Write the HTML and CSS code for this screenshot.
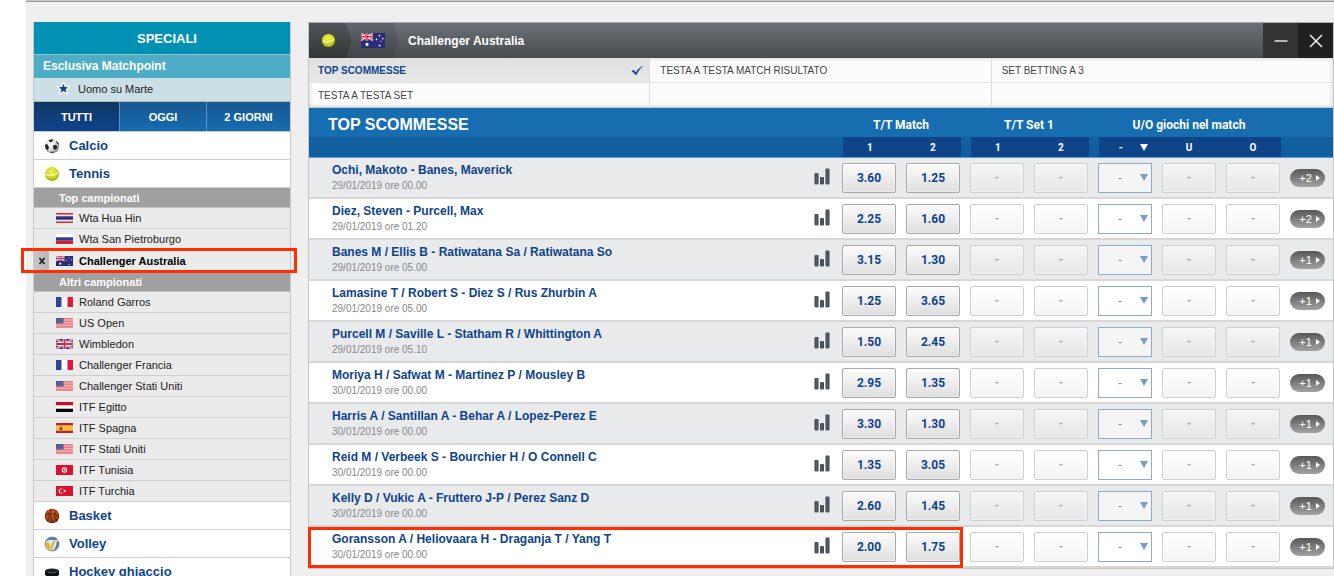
FILE: index.html
```html
<!DOCTYPE html>
<html lang="it">
<head>
<meta charset="utf-8">
<title>Challenger Australia - Scommesse</title>
<link rel="stylesheet" href="styles.css">
</head>
<body>
<svg class="defs" aria-hidden="true">
  <defs>
    <radialGradient id="g-tennis" cx=".45" cy=".35" r=".7"><stop offset="0" stop-color="#f0f250"/><stop offset=".6" stop-color="#cfd91f"/><stop offset="1" stop-color="#8c9a14"/></radialGradient>
    <radialGradient id="g-ball" cx=".4" cy=".35" r=".7"><stop offset="0" stop-color="#ffffff"/><stop offset=".6" stop-color="#dcdcd8"/><stop offset="1" stop-color="#77776f"/></radialGradient>
    <radialGradient id="g-basket" cx=".45" cy=".35" r=".7"><stop offset="0" stop-color="#cf6531"/><stop offset=".6" stop-color="#a8431b"/><stop offset="1" stop-color="#5a2410"/></radialGradient>
    <linearGradient id="g-bar" x1="0" x2="1" y1="0" y2="0"><stop offset="0" stop-color="#3b424b"/><stop offset=".5" stop-color="#545d68"/><stop offset="1" stop-color="#3b424b"/></linearGradient>
  </defs>
  <symbol id="tennis" viewBox="0 0 16 16"><circle cx="8" cy="8" r="7" fill="url(#g-tennis)"/><path d="M2 8.200C5 10.300 10 9.800 13.800 6.800" fill="none" stroke="#f8f9c8" stroke-width="1.200"/></symbol>
  <symbol id="soccer" viewBox="0 0 16 16"><circle cx="8" cy="8" r="7.300" fill="url(#g-ball)"/><path d="M4.500 2 8.500 1.200 9 3 6 4.500ZM1 6.500 3.500 6.200 5 9.500 3.800 12.200 1.500 10.500ZM9.200 7.200 12.200 6.800 13.500 9.500 11.500 12 9 10.500ZM12.500 3 15 6 14.200 6.800 12.300 4.800ZM6.300 14 9.800 13.800 8.500 15.200Z" fill="#25252a"/></symbol>
  <symbol id="basketball" viewBox="0 0 16 16"><circle cx="8" cy="8" r="7.300" fill="url(#g-basket)"/><path d="M1 7C5 5 11 5 15 9M7 1C6 5 7 11 9 15M3 2.800C6 6 6 10 3 13M12.500 2.500C9.500 6 10.500 11 13.500 12.500" fill="none" stroke="#3c170a" stroke-width=".7"/></symbol>
  <symbol id="volleyball" viewBox="0 0 16 16"><circle cx="8" cy="8" r="7.300" fill="#e7e7e1"/><path d="M1.500 5.500A7.300 7.300 0 0 1 13.300 3L10.500 4.500C7.500 3 4 4 1.500 5.500ZM12.500 5.500 14.800 6A7.300 7.300 0 0 1 8 15.200C11.500 13 12.800 9 12.500 5.500Z" fill="#4e7fb4"/><path d="M1 7.500 3.800 5.500 7 11 4.800 14ZM8.800 5.200 11.500 5 8 13.500 6 14.500Z" fill="#ddb52f"/><circle cx="8" cy="8" r="6.900" fill="none" stroke="#6c7984" stroke-width=".8"/></symbol>
  <symbol id="puck" viewBox="0 0 16 16"><path d="M1 7v3.500C1 13.500 15 13.500 15 10.500V7Z" fill="#101112"/><ellipse cx="8" cy="7" rx="7" ry="2.600" fill="#1d2022"/><path d="M4 8.600h8" stroke="#5b6062" stroke-width=".8"/></symbol>
  <symbol id="star" viewBox="0 0 14 14"><path d="M7 .4 9 4.600 13.700 5.200 10.300 8.300 11.200 13.200 7 10.900 2.800 13.200 3.700 8.300 .3 5.200 5 4.600Z" fill="#fff" stroke="#fff"/><path d="M7 2 8.400 5.400 12 5.700 9.300 8 10.200 11.600 7 9.700 3.800 11.600 4.700 8 2 5.700 5.600 5.400Z" fill="#16458d"/></symbol>
  <symbol id="stats" viewBox="0 0 16 17"><rect x=".5" y="5" width="4" height="11.500" rx="1" fill="url(#g-bar)"/><rect x="6" y="9" width="4" height="7.500" rx="1" fill="url(#g-bar)"/><rect x="11.500" y=".5" width="4" height="16" rx="1" fill="url(#g-bar)"/></symbol>
  <symbol id="f-th" viewBox="0 0 17 10" preserveAspectRatio="none"><path fill="#e9eaf0" d="M0 0h17v10H0z"/><path fill="#d4283a" d="M0 0h17v1.500H0zM0 8.500h17V10H0z"/><path fill="#2b2f73" d="M0 3.300h17v3.400H0z"/></symbol>
  <symbol id="f-ru" viewBox="0 0 17 10"><path fill="#fff" d="M0 0h17v3.300H0z"/><path fill="#2b3b9c" d="M0 3.300h17v3.400H0z"/><path fill="#d0202f" d="M0 6.700h17V10H0z"/></symbol>
  <symbol id="f-au" viewBox="0 0 24 14" preserveAspectRatio="none"><path fill="#2b2b7c" d="M0 0h24v14H0z"/><path d="M0 0 12 7M12 0 0 7" stroke="#fff" stroke-width="1.600"/><path d="M0 0 12 7M12 0 0 7" stroke="#e0283f" stroke-width=".7"/><path d="M6 0v7M0 3.500h12" stroke="#fff" stroke-width="2.600"/><path d="M6 0v7M0 3.500h12" stroke="#ec2040" stroke-width="1.500"/><g fill="#fff"><circle cx="6" cy="10.700" r="1.500"/><circle cx="18.500" cy="2.500" r=".8"/><circle cx="15.500" cy="6" r=".8"/><circle cx="21.800" cy="5.200" r=".8"/><circle cx="20" cy="7.800" r=".5"/><circle cx="18.500" cy="11.600" r=".9"/></g></symbol>
  <symbol id="f-fr" viewBox="0 0 17 10"><path fill="#fff" d="M0 0h17v10H0z"/><path fill="#2d449c" d="M0 0h5.500v10H0z"/><path fill="#e3173b" d="M11.500 0H17v10h-5.500z"/></symbol>
  <symbol id="f-us" viewBox="0 0 17 10"><path fill="#f4cccf" d="M0 0h17v10H0z"/><path stroke="#e0616b" stroke-width=".8" d="M0 .4h17M0 2h17M0 3.600h17M0 5.200h17M0 6.800h17M0 8.400h17M0 9.800h17"/><path fill="#52588c" d="M0 0h7.500v5.500H0z"/><path stroke="#9498bb" stroke-width=".5" stroke-dasharray=".6 .8" d="M.5 1.300h7M.5 2.800h7M.5 4.300h7"/></symbol>
  <symbol id="f-gb" viewBox="0 0 17 10"><path fill="#2c3380" d="M0 0h17v10H0z"/><path d="M0 0 17 10M17 0 0 10" stroke="#fff" stroke-width="2"/><path d="M0 0 17 10M17 0 0 10" stroke="#d92840" stroke-width=".8"/><path d="M8.500 0v10M0 5h17" stroke="#fff" stroke-width="3.400"/><path d="M8.500 0v10M0 5h17" stroke="#d92840" stroke-width="1.900"/></symbol>
  <symbol id="f-eg" viewBox="0 0 17 10"><path fill="#fff" d="M0 0h17v10H0z"/><path fill="#c8102e" d="M0 0h17v3.300H0z"/><path fill="#080808" d="M0 6.700h17V10H0z"/></symbol>
  <symbol id="f-es" viewBox="0 0 17 10"><path fill="#f3c241" d="M0 0h17v10H0z"/><path fill="#c51e35" d="M0 0h17v2.300H0zM0 7.700h17V10H0z"/><path fill="#764b27" d="M3.500 4.500h1V3.500h1v1h1v2.500h-3z"/></symbol>
  <symbol id="f-tn" viewBox="0 0 17 10"><path fill="#d9122d" d="M0 0h17v10H0z"/><circle cx="8.500" cy="5" r="2.700" fill="#fff"/><circle cx="8.600" cy="5" r="1.700" fill="#d9122d"/><circle cx="9.200" cy="5" r="1.200" fill="#fff"/><circle cx="9.400" cy="5" r=".7" fill="#d9122d"/></symbol>
  <symbol id="f-tr" viewBox="0 0 17 10"><path fill="#d9122d" d="M0 0h17v10H0z"/><circle cx="5.200" cy="5" r="2.500" fill="#fff"/><circle cx="5.900" cy="5" r="2" fill="#d9122d"/><circle cx="8.800" cy="5" r=".9" fill="#fff"/></symbol>
</svg>
<div class="page">
  <aside class="sidebar">
    <h2 class="specials-title">SPECIALI</h2>
    <h3 class="specials-sub">Esclusiva Matchpoint</h3>
    <a class="specials-link" href="#"><svg class="star"><use href="#star"/></svg>Uomo su Marte</a>
    <div class="day-tabs">
      <button class="day-tab is-active" type="button">TUTTI</button>
      <button class="day-tab" type="button">OGGI</button>
      <button class="day-tab" type="button">2 GIORNI</button>
    </div>
    <nav>
      <a class="sport" href="#"><svg class="ball"><use href="#soccer"/></svg>Calcio</a>
      <a class="sport" href="#"><svg class="ball"><use href="#tennis"/></svg>Tennis</a>
      <h4 class="group">Top campionati</h4>
      <ul class="leagues">
        <li class="league"><a href="#"><svg class="flag"><use href="#f-th"/></svg>Wta Hua Hin</a></li>
        <li class="league"><a href="#"><svg class="flag"><use href="#f-ru"/></svg>Wta San Pietroburgo</a></li>
        <li class="league is-selected"><button class="remove" type="button" aria-label="Rimuovi"><svg viewBox="0 0 8 8"><path d="M1.500 1 6.500 7M6.500 1 1.500 7" stroke="#222" stroke-width="1.800"/></svg></button><a href="#"><svg class="flag"><use href="#f-au"/></svg>Challenger Australia</a></li>
      </ul>
      <h4 class="group">Altri campionati</h4>
      <ul class="leagues">
        <li class="league"><a href="#"><svg class="flag"><use href="#f-fr"/></svg>Roland Garros</a></li>
        <li class="league"><a href="#"><svg class="flag"><use href="#f-us"/></svg>US Open</a></li>
        <li class="league"><a href="#"><svg class="flag"><use href="#f-gb"/></svg>Wimbledon</a></li>
        <li class="league"><a href="#"><svg class="flag"><use href="#f-fr"/></svg>Challenger Francia</a></li>
        <li class="league"><a href="#"><svg class="flag"><use href="#f-us"/></svg>Challenger Stati Uniti</a></li>
        <li class="league"><a href="#"><svg class="flag"><use href="#f-eg"/></svg>ITF Egitto</a></li>
        <li class="league"><a href="#"><svg class="flag"><use href="#f-es"/></svg>ITF Spagna</a></li>
        <li class="league"><a href="#"><svg class="flag"><use href="#f-us"/></svg>ITF Stati Uniti</a></li>
        <li class="league"><a href="#"><svg class="flag"><use href="#f-tn"/></svg>ITF Tunisia</a></li>
        <li class="league"><a href="#"><svg class="flag"><use href="#f-tr"/></svg>ITF Turchia</a></li>
      </ul>
      <a class="sport" href="#"><svg class="ball"><use href="#basketball"/></svg>Basket</a>
      <a class="sport" href="#"><svg class="ball"><use href="#volleyball"/></svg>Volley</a>
      <a class="sport" href="#"><svg class="ball"><use href="#puck"/></svg>Hockey ghiaccio</a>
    </nav>
  </aside>
  <main class="panel">
    <header class="panel-head">
      <a class="crumb crumb-sport" href="#" aria-label="Tennis"><svg class="head-ball"><use href="#tennis"/></svg></a>
      <a class="crumb crumb-country" href="#" aria-label="Australia"><svg class="head-flag"><use href="#f-au"/></svg></a>
      <h1 class="panel-title">Challenger Australia</h1>
      <button class="win win-min" type="button" aria-label="Riduci"><svg viewBox="0 0 14 14"><path d="M.5 7h13" stroke="#eee" stroke-width="1.400"/></svg></button>
      <button class="win win-close" type="button" aria-label="Chiudi"><svg viewBox="0 0 14 14"><path d="M1 1l12 12M13 1 1 13" stroke="#eee" stroke-width="1.500"/></svg></button>
    </header>
    <div class="markets">
      <button class="market is-active" type="button">TOP SCOMMESSE<svg class="check" viewBox="0 0 13 11"><path d="M.5 6 2.500 4.800 4.800 7.200C7 4 9.500 1.500 12.600.3 9.500 3.300 7 6.800 5.300 10.600Z" fill="#1c4f9b"/></svg></button>
      <button class="market" type="button">TESTA A TESTA MATCH RISULTATO</button>
      <button class="market" type="button">SET BETTING A 3</button>
      <button class="market" type="button">TESTA A TESTA SET</button>
      <span class="market"></span>
      <span class="market"></span>
    </div>
    <table class="odds">
      <colgroup><col><col class="c-odd" span="7"><col class="c-more"></colgroup>
      <thead>
        <tr class="head-groups"><th class="head-title" scope="col">TOP SCOMMESSE</th><th colspan="2" scope="colgroup">T/T Match</th><th colspan="2" scope="colgroup">T/T Set 1</th><th colspan="3" scope="colgroup">U/O giochi nel match</th><td></td></tr>
        <tr class="head-cols"><td></td><th scope="col"><div class="hc first">1</div></th><th scope="col"><div class="hc last">2</div></th><th scope="col"><div class="hc first">1</div></th><th scope="col"><div class="hc last">2</div></th><th scope="col"><div class="hc first"><select class="line-all" aria-label="Linea per tutti"><option>-</option></select><svg class="tri" viewBox="0 0 8 7"><path d="M0 0h8L4 7z" fill="#fff"/></svg></div></th><th scope="col"><div class="hc">U</div></th><th scope="col"><div class="hc last">O</div></th><td></td></tr>
      </thead>
      <tbody id="events">
      </tbody>
    </table>
  </main>
</div>
<script src="events.js"></script>
</body>
</html>
```
FILE: events.js
```js
const events = [
  ["Ochi, Makoto - Banes, Maverick", "29/01/2019 ore 00.00", "3.60", "1.25", 2],
  ["Diez, Steven - Purcell, Max", "29/01/2019 ore 01.20", "2.25", "1.60", 2],
  ["Banes M / Ellis B - Ratiwatana Sa / Ratiwatana So", "29/01/2019 ore 05.00", "3.15", "1.30", 1],
  ["Lamasine T / Robert S - Diez S / Rus Zhurbin A", "29/01/2019 ore 05.00", "1.25", "3.65", 1],
  ["Purcell M / Saville L - Statham R / Whittington A", "29/01/2019 ore 05.10", "1.50", "2.45", 1],
  ["Moriya H / Safwat M - Martinez P / Mousley B", "30/01/2019 ore 00.00", "2.95", "1.35", 1],
  ["Harris A / Santillan A - Behar A / Lopez-Perez E", "30/01/2019 ore 00.00", "3.30", "1.30", 1],
  ["Reid M / Verbeek S - Bourchier H / O Connell C", "30/01/2019 ore 00.00", "1.35", "3.05", 1],
  ["Kelly D / Vukic A - Fruttero J-P / Perez Sanz D", "30/01/2019 ore 00.00", "2.60", "1.45", 1],
  ["Goransson A / Heliovaara H - Draganja T / Yang T", "30/01/2019 ore 00.00", "2.00", "1.75", 1]
];

const odd = (value) => `<td><button class="odd" type="button">${value}</button></td>`;
const closed = `<td><button class="odd" type="button" disabled>-</button></td>`;
const line = (name) => `<td><div class="line"><select aria-label="Linea ${name}"><option>-</option></select><svg class="tri" viewBox="0 0 8 7"><path d="M0 0h8L4 7z" fill="#7b9ac4"/></svg></div></td>`;

document.getElementById("events").innerHTML = events.map(([name, time, one, two, more], i) => `
  <tr class="event${i === events.length - 1 ? " is-marked" : ""}">
    <th scope="row"><div class="match"><div class="match-text"><a class="match-name" href="#">${name}</a><time class="match-time">${time}</time></div><button class="stats" type="button" aria-label="Statistiche"><svg><use href="#stats"/></svg></button></div></th>
    ${odd(one)}${odd(two)}${closed}${closed}${line(name)}${closed}${closed}
    <td><button class="more" type="button">+${more}<svg viewBox="0 0 4 6"><path d="M0 0 4 3 0 6z" fill="#fff"/></svg></button></td>
  </tr>`).join("");
```
FILE: styles.css
```css
* { box-sizing: border-box; }
body {
  margin: 0;
  background: #fff;
  font-family: "Liberation Sans", Arial, sans-serif;
  font-size: 11px;
  color: #222;
}
a { color: inherit; text-decoration: none; }
button, select { font-family: inherit; border: 0; margin: 0; padding: 0; background: none; cursor: pointer; }
h1, h2, h3, h4, ul { margin: 0; padding: 0; list-style: none; }
svg { display: block; flex: none; }
.defs { position: absolute; width: 0; height: 0; }

.page {
  display: flex;
  align-items: flex-start;
  gap: 17px;
  height: 100vh;
  overflow: hidden;
  padding: 22px 0 0 33px;
  background:
    linear-gradient(90deg, #fff 26px, transparent 0),
    linear-gradient(#c9c9c9 1px, #999 0 2px, #efefef 0);
}

/* Sidebar */
.sidebar { flex: none; width: 258px; border: 1px solid #c9c9c9; border-top: 0; background: #fff; }
.specials-title { height: 32px; line-height: 33px; text-align: center; font-size: 13px; color: #fff; background: #0291b2; padding-left: 10px; }
.specials-sub { height: 24px; line-height: 23px; padding-left: 9px; font-size: 12px; color: #fff; background: #4dadc7; border-top: 1px solid #9ac0cc; }
.specials-link { display: flex; align-items: center; gap: 8px; height: 23px; padding: 0 0 2px 23px; color: #222; background: #cbdfe5; }
.star { width: 13px; height: 13px; }
.day-tabs { display: grid; grid-template-columns: 85fr 87fr 84fr; height: 31px; border-top: 1px solid #a9b9bf; border-bottom: 1px solid #c9c9c9; }
.day-tab { font-size: 11px; font-weight: 700; color: #fff; background: linear-gradient(#185891, #166cb0); border-left: 1px solid #5c93c0; }
.day-tab.is-active { background: linear-gradient(#103762, #0e448c); border-left: 0; }
.sport { display: flex; align-items: center; gap: 9px; height: 28px; padding-left: 10px; font-size: 13px; font-weight: 700; color: #0f438a; background: #fff; border-bottom: 1px solid #cfcfcf; }
.ball { width: 16px; height: 16px; }
.group { height: 20px; line-height: 20px; padding-left: 25px; font-size: 11px; color: #fff; background: #a0a0a0; border-bottom: 1px solid #c2c2c2; }
.league { display: flex; height: 21px; background: #ebebeb; border-bottom: 1px solid #cfcfcf; }
.league a { display: flex; flex: 1; align-items: center; gap: 6px; padding-left: 22px; }
.flag { width: 17px; height: 10px; }
.league.is-selected { position: relative; height: 22px; font-weight: 700; color: #000; }
.league.is-selected a { padding-left: 7px; }
.league.is-selected::after { content: ""; position: absolute; inset: -2px -7px -2px -13px; border: 3px solid #ff2d00; pointer-events: none; }
.remove { display: flex; align-items: center; justify-content: center; width: 15px; background: linear-gradient(90deg, #c6c6c6, #b8b8b8); }
.remove svg { width: 8px; height: 8px; }

/* Panel */
.panel { flex: 1; min-width: 0; border: 1px solid #c6c6c6; border-top: 0; background: #fff; }
.panel-head { display: flex; align-items: stretch; height: 36px; border-top: 1px solid #a9adaf; background: linear-gradient(#6c7178, #484c4f); color: #fff; }
.crumb { display: flex; align-items: center; }
.crumb-sport { width: 43px; padding-left: 12px; background: linear-gradient(#50565b, #313537); clip-path: polygon(0 0, 37px 0, 100% 50%, 37px 100%, 0 100%); }
.crumb-country { width: 53px; margin-left: -6px; padding-left: 15px; background: linear-gradient(#60666b, #3f4346); clip-path: polygon(0 0, 47px 0, 100% 50%, 47px 100%, 0 100%, 6px 50%); }
.head-ball { width: 15px; height: 15px; }
.head-flag { width: 24px; height: 15px; }
.panel-title { flex: 1; align-self: center; padding-left: 9px; font-size: 12px; }
.win { display: flex; align-items: center; justify-content: center; width: 35px; }
.win svg { width: 14px; height: 14px; }
.win-min { background: #333; }
.win-close { background: #212121; }
.markets { display: grid; grid-template-columns: 1fr 1fr 1fr; grid-template-rows: 25px 24px; background: #fcfcfc; box-shadow: inset 0 0 5px #ccc; border-bottom: 1px solid #bcc9d2; }
.market { display: flex; align-items: center; justify-content: space-between; padding: 0 5px 0 10px; font-size: 10px; color: #444; text-align: left; border-right: 1px solid #ddd; border-bottom: 1px solid #e2e2e2; }
.market:nth-child(3n) { border-right: 0; }
.market:nth-child(3n + 1) { padding-left: 9px; }
.market:nth-child(n + 4) { border-bottom: 0; }
.market.is-active { font-weight: 700; color: #10458d; background: linear-gradient(#dfdfdf, #e8e8e8); }
.check { width: 13px; height: 11px; }

/* Odds table */
.odds { width: 100%; table-layout: fixed; border-collapse: separate; border-spacing: 0; }
.odds th, .odds td { padding: 0; }
.c-odd { width: 64px; }
.c-more { width: 48px; }
.head-groups { height: 29px; background: #166db0; color: #fff; font-family: Roboto, sans-serif; font-size: 12px; }
.head-groups th { padding-top: 4px; }
.head-groups .head-title { padding: 4px 0 0 19px; text-align: left; font-family: "Liberation Sans", Arial, sans-serif; font-size: 16px; }
.head-cols { height: 21px; background: #125fa0; color: #fff; font-family: Roboto, sans-serif; font-size: 10px; }
.head-cols th, .head-cols td { border-bottom: 1px solid #5f9ccb; }
.hc { display: flex; align-items: center; justify-content: center; height: 20px; background: #0f4488; }
.hc.first { margin-left: 6px; padding-right: 4px; }
.hc.last { margin-right: 4px; padding-left: 4px; }
.hc .tri { margin-left: 15px; }
.tri { width: 8px; height: 7px; }
.line-all { appearance: none; width: 6px; color: #fff; font-size: 11px; font-weight: 700; margin-left: 14px; }
.event { height: 41px; background: #fff; }
.event:nth-child(odd) { background: #e9eaec; }
.event th, .event td { border-bottom: 2px solid #d7d7d8; }
.match { display: flex; align-items: center; justify-content: space-between; padding: 0 7px 0 23px; text-align: left; }
.match-text { display: flex; flex-direction: column; gap: 2px; }
.match-name { font-size: 12px; line-height: 14px; color: #0f438a; }
.match-time { font-size: 10px; line-height: 14px; font-weight: 400; color: #888; }
.stats { padding-bottom: 3px; }
.stats svg { width: 16px; height: 17px; }
.odd, .line { display: flex; align-items: center; justify-content: center; width: 54px; height: 30px; margin: 0 auto; }
.odd { border: 1px solid #a9a9a9; border-radius: 2px; background: linear-gradient(#fcfcfc, #dedede); font-family: Roboto, sans-serif; font-size: 12px; font-weight: 700; color: #0f438a; box-shadow: inset 0 0 0 1px #ffffff66; }
.odd:disabled { border-color: #cfcfcf; background: linear-gradient(#ffffff88, #e2e2e266); color: #aaa; cursor: default; }
.line { border: 1px solid #8daad0; background: #ffffff88; gap: 16px; padding-left: 16px; }
.line select { appearance: none; width: 6px; font-size: 12px; color: #6f92c0; }
.more { display: flex; align-items: center; justify-content: center; gap: 4px; width: 35px; height: 18px; margin-left: 5px; padding-left: 4px; border-radius: 9px; background: linear-gradient(#585858, #a2a2a2); font-size: 11px; color: #fff; }
.more svg { width: 4px; height: 6px; }
.is-marked { position: relative; }
.is-marked th::after { content: ""; position: absolute; inset: 0 370px 0 -1px; border: 3px solid #ff2d00; pointer-events: none; }
```
